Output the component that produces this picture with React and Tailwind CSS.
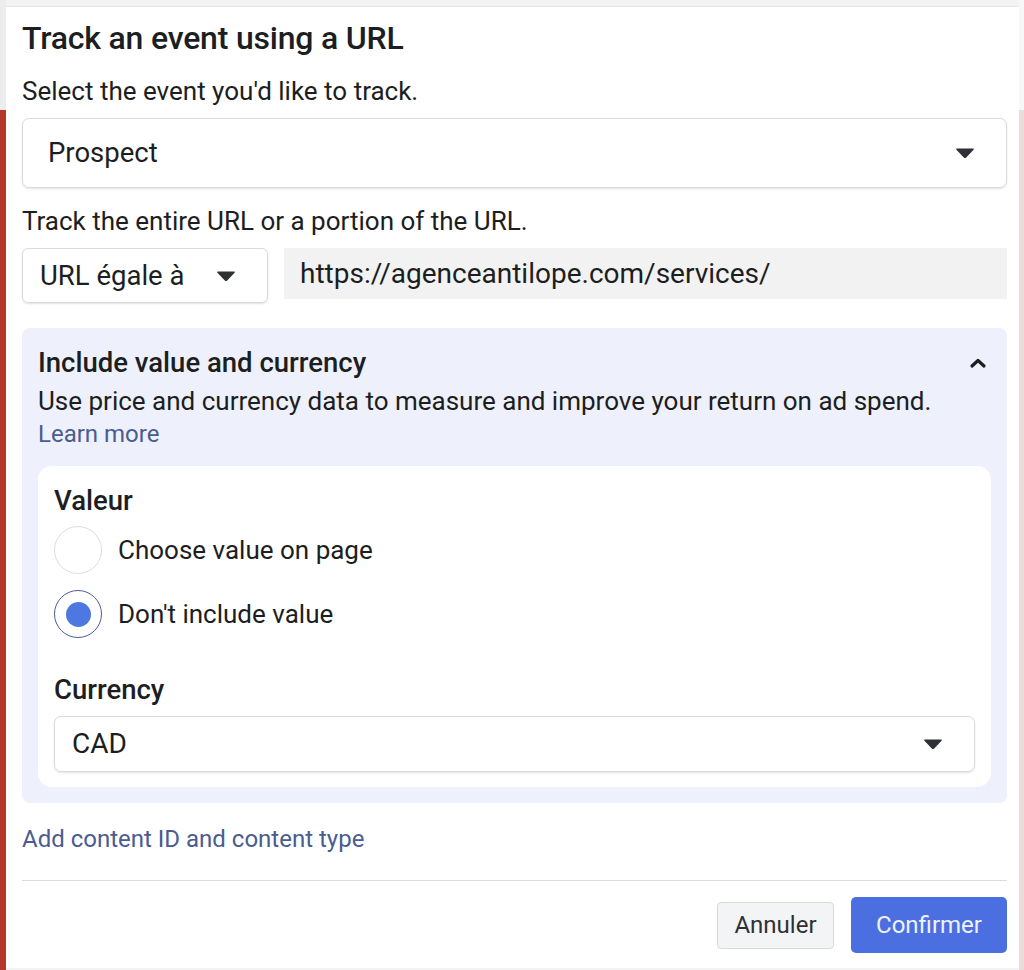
import React, { useState } from 'react';

// small filled caret used in the select boxes
const Caret = ({ className = '' }) => (
    <svg width="20" height="12" viewBox="0 0 20 12" className={className}>
        <path d="M2 1.5 H18 Q19.5 1.5 18.6 2.8 L11.2 10.4 Q10 11.6 8.8 10.4 L1.4 2.8 Q0.5 1.5 2 1.5 Z" fill="#2f3033" />
    </svg>
);

const ChevronUp = () => (
    <svg width="18" height="12" viewBox="0 0 18 12">
        <path d="M3 9 L9 3.5 L15 9" fill="none" stroke="#1c1e21" strokeWidth="3.2" strokeLinecap="round" strokeLinejoin="round" />
    </svg>
);

const Radio = ({ checked, label, onClick }) => (
    <button type="button" onClick={onClick} className="flex items-center h-[48px] text-left">
        <span
            className={`w-[48px] h-[48px] rounded-full flex items-center justify-center bg-white ${checked
                ? 'border-[1.5px] border-[#4f5f96]'
                : 'border-[1.5px] border-[#dcdde0]'
                }`}
        >
            {checked && <span className="w-[25px] h-[25px] rounded-full bg-[#4d78e2]" />}
        </span>
        <span className="ml-[16px] text-[26px] text-[#1c1e21]">{label}</span>
    </button>
);

const App = () => {
    const [valueMode, setValueMode] = useState('none');
    const [open, setOpen] = useState(true);

    return (
        <div className="w-[1024px] h-[970px] flex bg-[#f3f3f3] overflow-hidden" style={{ fontFamily: 'Roboto, "Liberation Sans", sans-serif' }}>
            {/* page edge behind the dialog */}
            <div className="w-[6px] flex flex-col">
                <div className="h-[110px] bg-[#ededed]" />
                <div className="flex-1 bg-[#b5392b]" />
            </div>

            {/* Dialog */}
            <div className="w-[1013px] mt-[6px] mb-[2px] bg-white border-t border-[#e6e6e6] pl-[16px] pr-[12px] pt-[13px] pb-[14px] flex flex-col text-[#1c1e21]">
                <h2 className="text-[32px] leading-[36px] font-medium tracking-[-0.2px]">Track an event using a URL</h2>

                <p className="mt-[19px] text-[26px] leading-[32px]">Select the event you'd like to track.</p>

                <div className="mt-[11px] h-[70px] rounded-[7px] border border-[#dadbde] shadow-[0_1px_2px_rgba(0,0,0,0.12)] flex items-center justify-between pl-[25px] pr-[31px]">
                    <span className="text-[27.5px]">Prospect</span>
                    <Caret />
                </div>

                <p className="mt-[17px] text-[26px] leading-[32px]">Track the entire URL or a portion of the URL.</p>

                <div className="mt-[11px] flex items-start gap-[16px]">
                    <div className="w-[246px] h-[55px] rounded-[6px] border border-[#dadbde] shadow-[0_1px_2px_rgba(0,0,0,0.12)] flex items-center justify-between pl-[17px] pr-[31px] shrink-0">
                        <span className="text-[27.5px]">URL égale à</span>
                        <Caret />
                    </div>
                    <div className="flex-1 h-[51px] bg-[#f2f2f3] flex items-center pl-[16px]">
                        <span className="text-[28px] text-[#1c1e21]">https://agenceantilope.com/services/</span>
                    </div>
                </div>

                {/* value & currency section */}
                <div className="mt-[25px] bg-[#eef1fb] rounded-[8px] px-[16px] pt-[17px] pb-[16px]">
                    <button type="button" onClick={() => setOpen(!open)} className="w-full flex items-center justify-between pr-[4px]">
                        <span className="text-[27.5px] leading-[36px] font-medium">Include value and currency</span>
                        <ChevronUp />
                    </button>
                    <p className="mt-[4px] text-[26px] leading-[33px]">Use price and currency data to measure and improve your return on ad spend.</p>
                    <a href="#" className="block text-[24px] leading-[33px] text-[#4a5c90]">Learn more</a>

                    {open && (
                        <div className="mt-[15px] bg-white rounded-[14px] px-[16px] pt-[19px] pb-[15px]">
                            <h3 className="text-[27.5px] leading-[32px] font-medium">Valeur</h3>
                            <div className="mt-[9px] flex flex-col gap-[16px]">
                                <Radio checked={valueMode === 'page'} label="Choose value on page" onClick={() => setValueMode('page')} />
                                <Radio checked={valueMode === 'none'} label="Don't include value" onClick={() => setValueMode('none')} />
                            </div>
                            <h3 className="mt-[36px] text-[27.5px] leading-[32px] font-medium">Currency</h3>
                            <div className="mt-[10px] h-[56px] rounded-[7px] border border-[#dadbde] shadow-[0_1px_2px_rgba(0,0,0,0.12)] flex items-center justify-between pl-[17px] pr-[31px]">
                                <span className="text-[28px]">CAD</span>
                                <Caret />
                            </div>
                        </div>
                    )}
                </div>

                <a href="#" className="mt-[20px] text-[24px] leading-[32px] text-[#4a5c90]">Add content ID and content type</a>

                <div className="mt-[25px] h-px bg-[#dcdcdc]" />

                <div className="mt-[16px] flex items-center justify-end gap-[17px]">
                    <button type="button" className="w-[117px] h-[47px] rounded-[4px] bg-[#f3f4f6] border border-[#d8d9dc] text-[24px] text-[#2f3033]">Annuler</button>
                    <button type="button" className="w-[156px] h-[56px] rounded-[5px] bg-[#4b6ee0] text-[24px] text-[#eef2ff]">Confirmer</button>
                </div>
            </div>

            <div className="w-[5px] flex flex-col">
                <div className="h-[110px] bg-[#f7f7f7]" />
                <div className="flex-1 bg-[#e9dcd9]" />
            </div>
        </div>
    );
};

export default App;
